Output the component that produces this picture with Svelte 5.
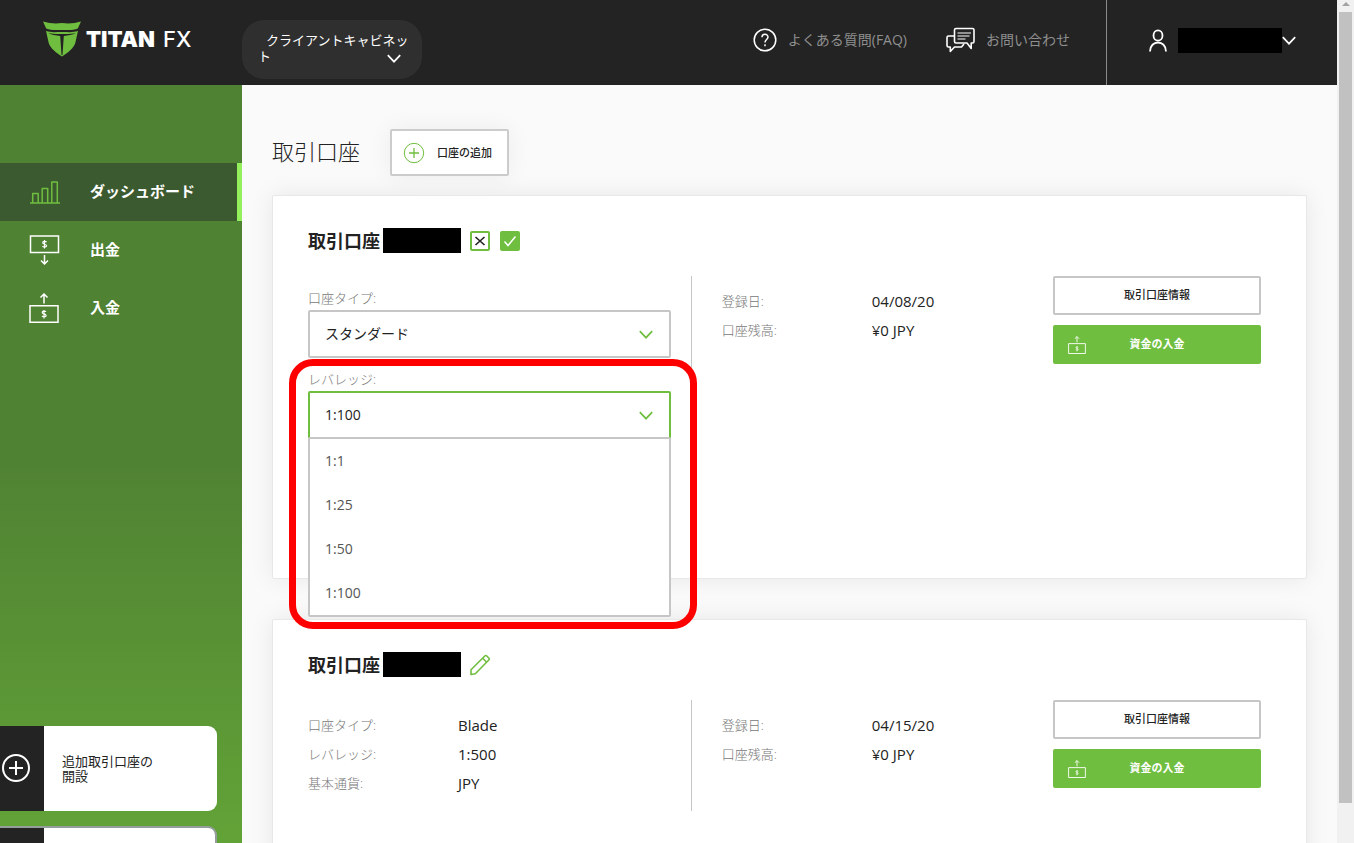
<script lang="ts">
  type Row = { label: string; value: string };

  const infoLeft: Row[] = [
    { label: '口座タイプ:', value: 'Blade' },
    { label: 'レバレッジ:', value: '1:500' },
    { label: '基本通貨:', value: 'JPY' },
  ];
  const infoFirst: Row[] = [
    { label: '登録日:', value: '04/08/20' },
    { label: '口座残高:', value: '¥0 JPY' },
  ];
  const infoSecond: Row[] = [
    { label: '登録日:', value: '04/15/20' },
    { label: '口座残高:', value: '¥0 JPY' },
  ];
  const leverages = ['1:1', '1:25', '1:50', '1:100'];

  let accountType = $state('standard');
  let leverage = $state('1:100');
  let menuOpen = $state(true);

  function pick(value: string) {
    leverage = value;
    menuOpen = false;
  }
</script>

{#snippet chevron()}
  <svg class="chevron" viewBox="0 0 14 9" width="14" height="9" aria-hidden="true">
    <path d="M.8 1.2L7 7.7l6.2-6.5" fill="none" stroke="currentColor" stroke-width="1.7" />
  </svg>
{/snippet}

{#snippet deposit(size: number)}
  <svg viewBox="0 0 30 30" width={size} height={size} fill="none" stroke="currentColor" stroke-width="1.5" aria-hidden="true">
    <path d="M1 12.7h28v16.5H1z" />
    <path d="M15 10.5V1M11.5 4.5L15 1l3.5 3.5" />
    <path d="M17 18.8c-.6-1-3.8-1.1-3.8.6 0 1.8 3.9 1.2 3.9 3 0 1.7-3.3 1.7-4.1.5M15 17v8.5" stroke-width="1.2" />
  </svg>
{/snippet}

{#snippet rows(items: Row[])}
  {#each items as row}
    <div class="row">
      <dt>{row.label}</dt>
      <dd>{row.value}</dd>
    </div>
  {/each}
{/snippet}

{#snippet actions()}
  <div class="actions">
    <button class="btn outline">取引口座情報</button>
    <button class="btn fill">
      <span class="btn-icon">{@render deposit(18)}</span>
      資金の入金
    </button>
  </div>
{/snippet}

<div class="app">
  <div class="page">
    <header class="topbar">
      <a class="logo" href="/" aria-label="TitanFX">
        <svg viewBox="0 0 38 36" width="38" height="36" fill="#6fbe3f" aria-hidden="true">
          <path d="M0 .6C6.5 2.6 13 2.6 19 2.100c6 .5 12.5.5 19-1.500l-3.200 6.900C30 9.7 24.5 9 19 9S8 9.7 3.2 7.5z" />
          <path d="M3 9.800c4.500 1.900 9 1.200 16 1.200s11.500.7 16-1.200L32.300 22C30.500 27.500 25 31.500 19 35.500 13 31.500 7.500 27.500 5.700 22z" />
          <path d="M5 12c5 1.300 10 1 14 1s9 .3 14-1c-3.500 2.200-8 2.300-12.200 2.900L19.500 34h-1l-1.300-19.100C13 14.300 8.500 14.200 5 12z" fill="#232323" />
        </svg>
        <span class="logo-text"><b>TITAN</b><i>FX</i></span>
      </a>

      <button class="cabinet">
        クライアントキャビネット
        <span class="cabinet-arrow">{@render chevron()}</span>
      </button>

      <nav class="links">
        <a href="#faq">
          <svg viewBox="0 0 24 24" width="24" height="24" fill="none" stroke="#fff" stroke-width="1.5" aria-hidden="true">
            <circle cx="12" cy="12" r="10.8" />
            <path d="M9 9.300c0-4 6-4 6-.2 0 2.500-3 2.500-3 5.500M12 16.200v2" />
          </svg>
          <span>よくある質問(FAQ)</span>
        </a>
        <a href="#contact">
          <svg viewBox="0 0 29 26" width="29" height="26" fill="none" stroke="#fff" stroke-width="1.6" stroke-linejoin="round" aria-hidden="true">
            <path d="M8.500 3Q8.500 1.500 10 1.500h16.500Q28 1.500 28 3v11.500q0 1.500-1.500 1.500h-1.300v5.500L21 16H10q-1.500 0-1.500-1.500z" />
            <path d="M11.500 6h13.500M11.500 9h12M11.500 12h8" stroke-width="1.2" />
            <path d="M8.500 9H2.500Q1 9 1 10.500v8Q1 20 2.500 20h1.800v4.500L8.500 20h7l2.500-3" />
          </svg>
          <span>お問い合わせ</span>
        </a>
      </nav>

      <button class="user" aria-label="アカウント">
        <svg viewBox="0 0 20 24" width="20" height="24" fill="none" stroke="#fff" stroke-width="1.8" aria-hidden="true">
          <ellipse cx="10" cy="6.5" rx="4.5" ry="5.2" />
          <path d="M2 22.500c0-12 16-12 16 0" />
        </svg>
        <span class="mask name"></span>
        {@render chevron()}
      </button>
    </header>

    <div class="body">
      <aside class="sidebar">
        <nav class="menu">
          <a class="active" href="#dashboard">
            <svg viewBox="0 0 31 30" width="31" height="30" fill="none" stroke="#6fbe3f" stroke-width="1.5" stroke-linejoin="round" aria-hidden="true">
              <path d="M1 26h30M3.700 26V16.500h5.500V26M13.200 26V11.500h5.500V26M22.800 26V5h5.500v21" />
            </svg>
            <span>ダッシュボード</span>
          </a>
          <a href="#withdraw">
            <svg viewBox="0 0 30 30" width="31" height="30" fill="none" stroke="#fff" stroke-width="1.5" aria-hidden="true">
              <path d="M1 1h28v16.500H1z" />
              <path d="M15 20v9M11.500 25.500L15 29l3.500-3.500" />
              <path d="M17 7.100c-.6-1-3.8-1.1-3.8.6 0 1.8 3.9 1.2 3.9 3 0 1.7-3.3 1.7-4.1.5M15 5v8.5" stroke-width="1.2" />
            </svg>
            <span>出金</span>
          </a>
          <a href="#deposit">
            {@render deposit(30)}
            <span>入金</span>
          </a>
        </nav>

        <div class="promos">
          <a class="promo" href="#open">
            <span class="promo-icon">
              <svg viewBox="0 0 30 30" width="30" height="30" fill="none" stroke="#fff" stroke-width="2" aria-hidden="true">
                <circle cx="16" cy="14" r="13" />
                <path d="M9 14h14M16 7v14" />
              </svg>
            </span>
            <span class="promo-text">追加取引口座の開設</span>
          </a>
          <a class="promo bordered" href="#more" aria-label="その他">
            <span class="promo-icon"></span>
          </a>
        </div>
      </aside>

      <main>
        <div class="heading">
          <h1>取引口座</h1>
          <button class="add">
            <svg viewBox="0 0 22 22" width="22" height="22" fill="none" stroke="#6fbe3f" aria-hidden="true">
              <circle cx="11" cy="11" r="9.7" />
              <path d="M6 11h10M11 6v10" stroke-width="1.3" />
            </svg>
            <span>口座の追加</span>
          </button>
        </div>

        <section class="card editing">
          <div class="title">
            <h2>取引口座</h2>
            <span class="mask number"></span>
            <button class="tick cancel" aria-label="キャンセル">
              <svg viewBox="0 0 16 16" width="16" height="16" fill="none" stroke="#222" stroke-width="1.6" aria-hidden="true">
                <path d="M3.500 4l9 8M12.500 4l-9 8" />
              </svg>
            </button>
            <button class="tick ok" aria-label="保存">
              <svg viewBox="0 0 16 16" width="16" height="16" fill="none" stroke="#fff" stroke-width="1.5" aria-hidden="true">
                <path d="M2.500 8.500L6 12.500 13.500 3.500" />
              </svg>
            </button>
          </div>
          <div class="columns">
            <div class="col form">
              <div class="field">
                <label for="type">口座タイプ:</label>
                <div class="control">
                  <select id="type" bind:value={accountType}>
                    <option value="standard">スタンダード</option>
                    <option value="blade">Blade</option>
                  </select>
                  {@render chevron()}
                </div>
              </div>
              <div class="field">
                <label for="leverage">レバレッジ:</label>
                <div class="control" class:open={menuOpen}>
                  <select id="leverage" bind:value={leverage} onfocus={() => (menuOpen = true)}>
                    {#each leverages as l}
                      <option value={l}>{l}</option>
                    {/each}
                  </select>
                  {@render chevron()}
                  {#if menuOpen}
                    <div class="options">
                      {#each leverages as l}
                        <button onclick={() => pick(l)}>{l}</button>
                      {/each}
                    </div>
                  {/if}
                </div>
                <div class="highlight"></div>
              </div>
            </div>
            <dl class="col">{@render rows(infoFirst)}</dl>
            {@render actions()}
          </div>
        </section>

        <section class="card">
          <div class="title">
            <h2>取引口座</h2>
            <span class="mask number"></span>
            <button class="edit" aria-label="編集">
              <svg viewBox="0 0 20 22" width="20" height="22" fill="none" stroke="#6fbe3f" stroke-width="1.6" stroke-linejoin="round" aria-hidden="true">
                <path d="M1 20.500v-4.700L14.800 2Q15.800 1 16.800 2L18.800 4Q19.700 5 18.800 6L5.300 19.700z" />
                <path d="M12.700 4.200l4 4" />
              </svg>
            </button>
          </div>
          <div class="columns">
            <dl class="col">{@render rows(infoLeft)}</dl>
            <dl class="col">{@render rows(infoSecond)}</dl>
            {@render actions()}
          </div>
        </section>
      </main>
    </div>
  </div>

  <div class="scrollbar" aria-hidden="true">
    <svg viewBox="0 0 8 4" width="8" height="4"><path d="M0 4l4-4 4 4z" fill="#a3a3a3" /></svg>
    <div class="thumb"></div>
  </div>
</div>

<style>
  :global(body) { margin: 0; overflow: hidden; }
  .app {
    display: flex;
    height: 100vh;
    overflow: hidden;
    background: #fafafa;
    color: #222;
    font-family: "Open Sans", "Noto Sans CJK JP", sans-serif;
    font-size: 15px;
  }
  .app :is(button, select) { font-family: inherit; color: inherit; cursor: pointer; }
  .app button { border: none; background: none; padding: 0; }
  .app a { color: inherit; text-decoration: none; }
  h1, h2, dl, dd { margin: 0; }
  svg { display: block; flex: none; }
  .page { flex: 1; min-width: 0; display: flex; flex-direction: column; }
  .mask { background: #000; height: 25px; }

  .topbar { display: flex; align-items: stretch; height: 85px; flex: none; background: #232323; color: #fff; }
  .logo { display: flex; align-items: center; gap: 5px; width: 199px; margin-left: 43px; padding-bottom: 8px; box-sizing: border-box; }
  .logo-text { display: flex; gap: 8px; font-family: Inter, sans-serif; font-size: 22px; line-height: 24px; }
  .logo-text b { font-weight: 900; }
  .logo-text i { font-style: normal; font-weight: 500; }
  .app .cabinet {
    position: relative;
    align-self: center;
    width: 180px;
    height: 59px;
    margin-top: 14px;
    padding: 0 10px 4px 16px;
    box-sizing: border-box;
    border-radius: 22px;
    background: #2f2f2f;
    font-size: 13px;
    line-height: 16px;
    text-align: left;
    text-indent: 8px;
  }
  .cabinet-arrow { position: absolute; right: 21px; bottom: 16px; }
  .links { display: flex; align-items: center; gap: 39px; margin-left: auto; padding: 0 36px 6px 0; color: #8f8f8f; font-size: 14px; }
  .links a { display: flex; align-items: center; gap: 11px; white-space: nowrap; }
  .links span { padding-bottom: 2px; }
  .app .user { display: flex; align-items: center; padding: 0 41px 4px; border-left: 1px solid #8a8a8a; }
  .name { width: 104px; margin-left: 10px; }

  .body { flex: 1; display: flex; min-height: 0; }
  .sidebar {
    display: flex;
    flex-direction: column;
    justify-content: space-between;
    width: 242px;
    flex: none;
    padding-top: 78px;
    box-sizing: border-box;
    background: linear-gradient(#508233 50%, #62a337);
  }
  .menu a { display: grid; grid-template-columns: 31px 1fr; gap: 30px; align-items: center; height: 58px; padding-left: 29px; color: #fff; font-weight: 700; }
  .menu span { padding-bottom: 4px; }
  .menu .active { background: #3c5a2f; border-right: 5px solid #93f05c; }
  .promos { display: flex; flex-direction: column; gap: 15px; height: 117px; overflow: hidden; }
  .promo { display: flex; flex: none; width: 217px; height: 85px; overflow: hidden; border-radius: 0 9px 9px 0; background: #fff; font-size: 13px; line-height: 15px; }
  .promo.bordered { border: 2px solid #959d9b; border-left: none; box-sizing: border-box; }
  .promo-icon { display: flex; align-items: center; width: 44px; flex: none; background: #232323; }
  .promo-text { width: 92px; align-self: center; margin-left: 18px; }

  main { flex: 1; min-width: 0; padding: 44px 30px 0; overflow: hidden; }
  .heading { display: flex; align-items: center; gap: 30px; margin-bottom: 19px; }
  h1 { padding-bottom: 4px; font-size: 22px; font-weight: 300; line-height: 30px; }
  .app .add {
    display: flex;
    align-items: center;
    gap: 12px;
    height: 47px;
    padding: 0 15px 0 11px;
    border: 2px solid #ccc;
    border-radius: 2px;
    background: #fff;
    box-shadow: 0 0 25px rgba(0, 0, 0, .06);
    font-size: 11px;
    font-weight: 500;
  }
  .add span { padding-bottom: 2px; }
  .card { min-height: 316px; padding: 32px 45px 35px 35px; margin-bottom: 40px; border: 1px solid #e8e8e8; border-radius: 2px; background: #fff; box-shadow: 0 0 25px rgba(0, 0, 0, .08); }
  .editing { position: relative; z-index: 1; padding-bottom: 31px; }
  .editing .columns { min-height: 271px; }
  .title { display: flex; align-items: center; height: 25px; margin-bottom: 23px; }
  h2 { padding-top: 1px; font-size: 18px; font-weight: 700; line-height: 25px; }
  .number { width: 78px; margin: 0 9px 0 3px; }
  .app .tick { width: 20px; height: 20px; margin-right: 10px; border: 2px solid #6fbe3f; border-radius: 2px; }
  .app .ok { background: #6fbe3f; }

  .columns { display: grid; grid-template-columns: 17fr 16fr 208px; align-items: start; }
  .col { padding: 11px 0 13px; }
  .col:first-child { padding-right: 20px; border-right: 1px solid #c6c6c6; }
  .col:nth-child(2) { padding-left: 30px; }
  .row { display: flex; line-height: 29px; }
  dt, label { color: #777; font-size: 13px; font-weight: 300; }
  dt { width: 150px; }
  .field { position: relative; margin-top: 1px; margin-bottom: 11px; }
  label { display: block; line-height: 20px; margin-bottom: 2px; }
  .control { position: relative; color: #6fbe3f; }
  .app .control select {
    display: block;
    width: 100%;
    height: 48px;
    padding: 0 40px 2px 15px;
    appearance: none;
    border: 2px solid #c6c6c6;
    border-radius: 2px;
    background: #fff;
    color: #222;
    font-size: 14px;
    outline: none;
  }
  .app .open select { border-color: #6fbe3f; }
  .control > :global(.chevron) { position: absolute; right: 18px; top: 20px; pointer-events: none; }
  .options { position: absolute; top: 46px; left: 0; right: 0; border: 2px solid #c6c6c6; border-radius: 2px; background: #fff; }
  .app .options button { display: block; width: 100%; height: 44px; padding: 0 15px 2px; color: #555; font-size: 14px; text-align: left; }
  .highlight { position: absolute; inset: -10px -26px -190px -19px; border: 7px solid #f00; border-radius: 24px; pointer-events: none; }

  .actions { display: flex; flex-direction: column; gap: 10px; }
  .app .btn { position: relative; height: 39px; padding-bottom: 3px; border-radius: 2px; font-size: 11px; font-weight: 500; }
  .app .outline { border: 2px solid #c6c6c6; background: #fff; }
  .app .fill { background: #6fbe3f; color: #fff; font-weight: 700; }
  .btn-icon { position: absolute; left: 15px; top: 11px; }

  .scrollbar { display: flex; flex-direction: column; align-items: center; gap: 6px; width: 17px; flex: none; padding-top: 2px; box-sizing: border-box; background: #f1f1f1; }
  .thumb { width: 13px; height: 94%; background: #c1c1c1; }
</style>
